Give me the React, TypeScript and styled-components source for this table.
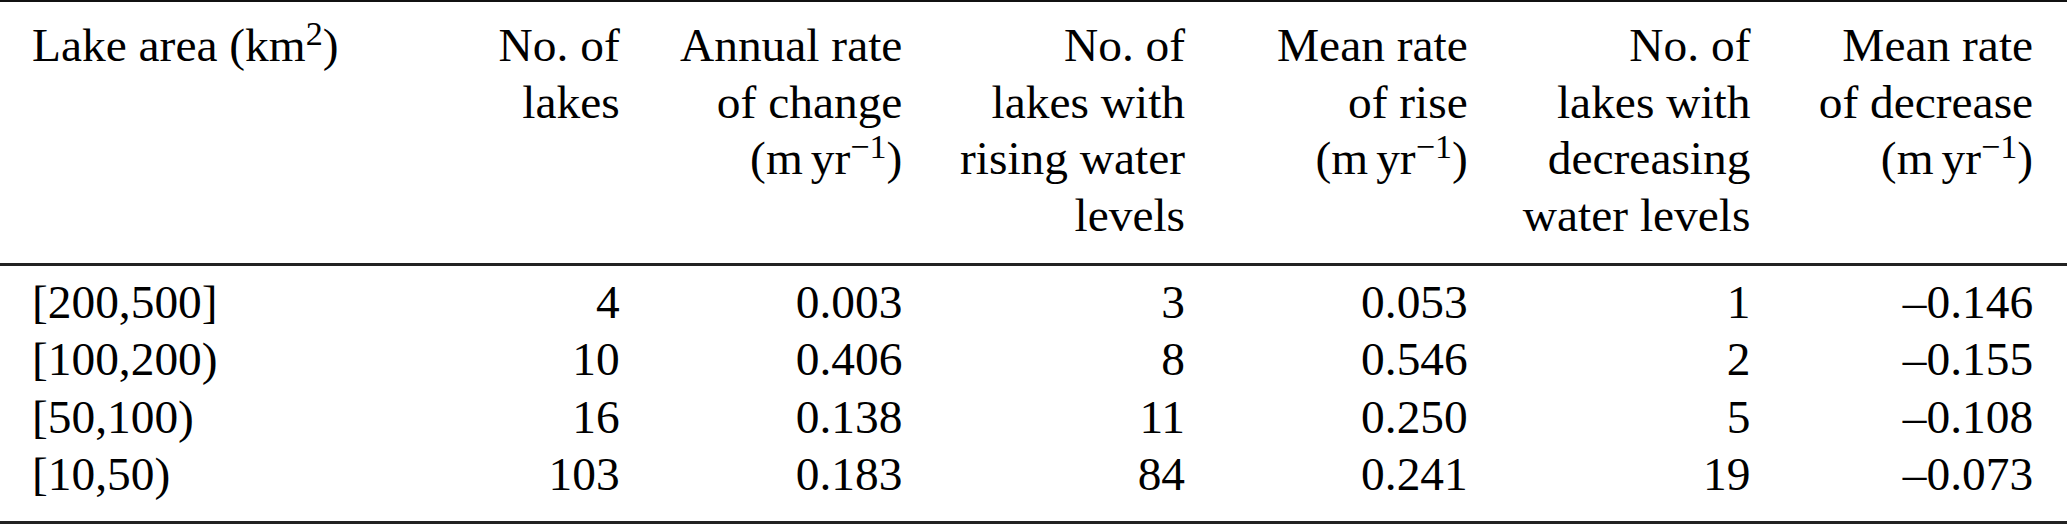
import styled, { createGlobalStyle } from 'styled-components';

const GlobalStyle = createGlobalStyle`
  html, body {
    margin: 0;
    padding: 0;
    background: #ffffff;
  }
`;

interface IRow {
  area: string;
  lakes: string;
  annual: string;
  rising: string;
  rise: string;
  decreasing: string;
  decrease: string;
}

const rows: IRow[] = [
  { area: '[200,500]', lakes: '4', annual: '0.003', rising: '3', rise: '0.053', decreasing: '1', decrease: '–0.146' },
  { area: '[100,200)', lakes: '10', annual: '0.406', rising: '8', rise: '0.546', decreasing: '2', decrease: '–0.155' },
  { area: '[50,100)', lakes: '16', annual: '0.138', rising: '11', rise: '0.250', decreasing: '5', decrease: '–0.108' },
  { area: '[10,50)', lakes: '103', annual: '0.183', rising: '84', rise: '0.241', decreasing: '19', decrease: '–0.073' },
];

const Unit = () => (
  <>
    (m<Thin />yr<Sup>−1</Sup>)
  </>
);

function App() {
  return (
    <>
      <GlobalStyle />
      <Table>
        <Head>
          <Cell align="left">
            Lake area (km<Sup>2</Sup>)
          </Cell>
          <Cell>
            No. of
            <br />
            lakes
          </Cell>
          <Cell>
            Annual rate
            <br />
            of change
            <br />
            <Unit />
          </Cell>
          <Cell>
            No. of
            <br />
            lakes with
            <br />
            rising water
            <br />
            levels
          </Cell>
          <Cell>
            Mean rate
            <br />
            of rise
            <br />
            <Unit />
          </Cell>
          <Cell>
            No. of
            <br />
            lakes with
            <br />
            decreasing
            <br />
            water levels
          </Cell>
          <Cell>
            Mean rate
            <br />
            of decrease
            <br />
            <Unit />
          </Cell>
        </Head>
        <Body>
          {rows.map((r) => (
            <Row key={r.area}>
              <Cell align="left">{r.area}</Cell>
              <Cell>{r.lakes}</Cell>
              <Cell>{r.annual}</Cell>
              <Cell>{r.rising}</Cell>
              <Cell>{r.rise}</Cell>
              <Cell>{r.decreasing}</Cell>
              <Cell>{r.decrease}</Cell>
            </Row>
          ))}
        </Body>
      </Table>
    </>
  );
}

const Table = styled.div`
  width: 2067px;
  font-family: 'Liberation Serif', 'Times New Roman', serif;
  font-size: 47.4px;
  color: #000000;
  border-top: 2px solid #111111;
  border-bottom: 3px solid #222222;
`;

const Head = styled.div`
  display: grid;
  grid-template-columns: 337px repeat(6, 282.7px);
  padding: 15px 0 20px;
  line-height: 56.5px;
  border-bottom: 3px solid #222222;
`;

const Body = styled.div`
  padding: 8px 0 18px;
  line-height: 57.3px;
`;

const Row = styled.div`
  display: grid;
  grid-template-columns: 337px repeat(6, 282.7px);
`;

interface ICell {
  align?: 'left' | 'right';
}

const Cell = styled.div<ICell>`
  text-align: ${(props) => props.align || 'right'};
  padding-left: ${(props) => (props.align === 'left' ? '32px' : '0')};
  white-space: nowrap;
`;

const Sup = styled.sup`
  font-size: 0.72em;
  line-height: 0;
  vertical-align: 0.47em;
`;

const Thin = styled.span`
  display: inline-block;
  width: 0.17em;
`;

export default App;
